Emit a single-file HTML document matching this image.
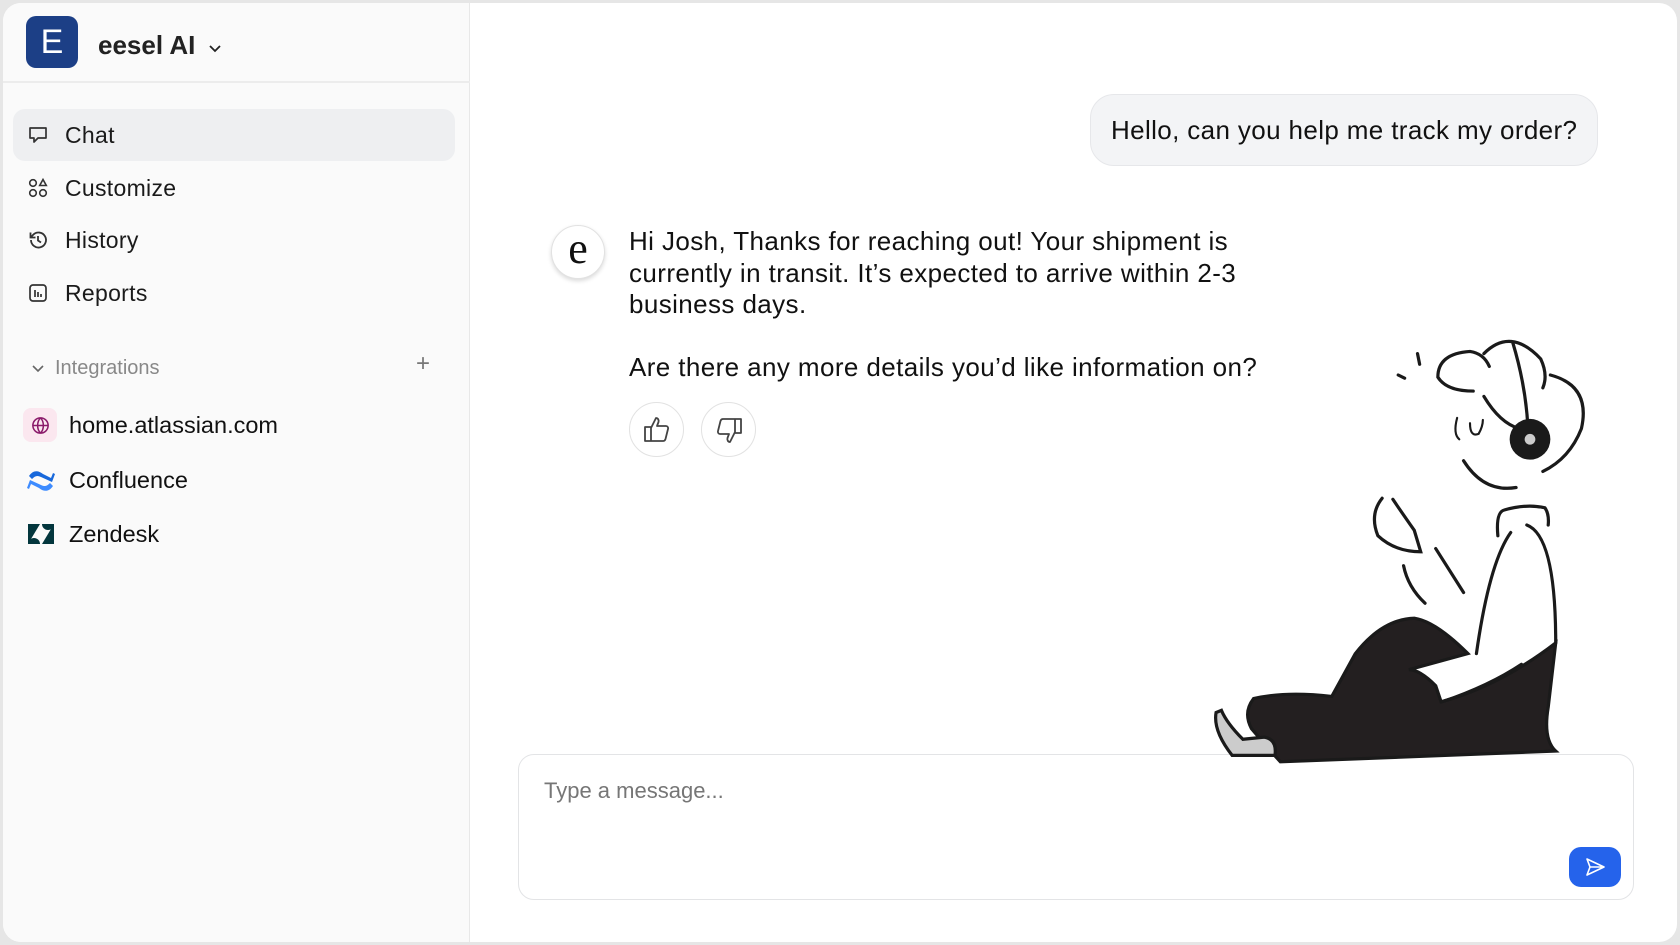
<!DOCTYPE html>
<html><head><meta charset="utf-8"><style>
*{box-sizing:border-box;margin:0;padding:0}
html,body{width:1680px;height:945px;overflow:hidden;background:#e6e6e6;font-family:"Liberation Sans",Arial,sans-serif;color:#111}
.frame{position:absolute;left:3px;top:3px;width:1674px;height:939px;background:#fff;border-radius:18px;overflow:hidden}
.side{position:absolute;left:0;top:0;width:467px;height:100%;background:#fafafa;border-right:1px solid #e8e8e8}
.hdr{position:absolute;left:0;top:0;width:467px;height:80px;border-bottom:2px solid #ececec}
.logo{position:absolute;left:23px;top:13px;width:52px;height:52px;background:#1c3f86;border-radius:10px;color:#fff;font-size:34px;text-align:center;line-height:52px}
.brand{position:absolute;left:95px;top:27px;font-size:26px;font-weight:bold;color:#222}
.nav{position:absolute;left:10px;width:442px;height:52px;border-radius:12px;font-size:23px;letter-spacing:.3px;line-height:52px;padding-left:52px;color:#1a1a1a}
.nav svg{position:absolute;left:14px;top:15px}
.act{background:#eeeff1}
.t{position:absolute;white-space:nowrap}
.msg{font-size:26px;letter-spacing:.4px;line-height:31.6px;color:#111}
.circ{position:absolute;border-radius:50%;border:1px solid #e2e2e2;background:#fff}
</style></head><body>
<div class="frame">
<div class="side">
 <div class="hdr"><div class="logo">E</div><div class="brand">eesel AI</div>
 <svg style="position:absolute;left:205px;top:41px" width="14" height="10" viewBox="0 0 14 10"><path d="M2 2l5 5 5-5" fill="none" stroke="#222" stroke-width="1.8"/></svg></div>
 <div class="nav act" style="top:106px">Chat<svg width="22" height="22" viewBox="0 0 22 22"><path d="M3 4h16v10h-8l-4 4v-4H3z" fill="none" stroke="#333" stroke-width="1.7" stroke-linejoin="round"/></svg></div>
 <div class="nav" style="top:158.5px">Customize<svg width="22" height="22" viewBox="0 0 22 22" fill="none" stroke="#333" stroke-width="1.6"><circle cx="6" cy="6" r="3.3"/><path d="M16 2.5l3.3 6h-6.6z"/><circle cx="6" cy="16" r="3.3"/><circle cx="16" cy="16" r="3.3"/></svg></div>
 <div class="nav" style="top:211px">History<svg width="22" height="22" viewBox="0 0 22 22" fill="none" stroke="#333" stroke-width="1.8"><path d="M4 11a7.5 7.5 0 1 0 2.2-5.3L3.5 8.5"/><path d="M3.5 3.5v5h5"/><path d="M11 7v4.5l3 2"/></svg></div>
 <div class="nav" style="top:263.5px">Reports<svg width="22" height="22" viewBox="0 0 22 22" fill="none" stroke="#333" stroke-width="1.7"><rect x="3" y="3" width="16" height="16" rx="3"/><path d="M8 8v7M11 10v5M14 12v3"/></svg></div>
 <svg style="position:absolute;left:28px;top:361px" width="14" height="10" viewBox="0 0 14 10"><path d="M2 2l5 5 5-5" fill="none" stroke="#666" stroke-width="1.6"/></svg>
 <div class="t" style="left:52px;top:354px;font-size:20px;color:#888">Integrations</div>
 <div class="t" style="left:413px;top:347px;font-size:24px;color:#777;font-weight:300">+</div>
 <div style="position:absolute;left:20px;top:405px;width:34px;height:34px;background:#fbe7ef;border-radius:8px"></div>
 <svg style="position:absolute;left:27px;top:412px" width="21" height="21" viewBox="0 0 22 22" fill="none" stroke="#8a1a6a" stroke-width="1.6"><circle cx="11" cy="11" r="8"/><path d="M3 11h16M11 3c-4 4-4 12 0 16M11 3c4 4 4 12 0 16"/></svg>
 <div class="t" style="left:66px;top:409px;font-size:23.5px">home.atlassian.com</div>
 <svg style="position:absolute;left:24px;top:464px" width="28" height="28" viewBox="0 0 28 28"><path d="M2 9c4-6 9-6 14-2l8 4 2-5 2 1-3 8-11-5c-4-2-6-1-9 2z" fill="#1868db"/><path d="M26 19c-4 6-9 6-14 2l-8-4-2 5-2-1 3-8 11 5c4 2 6 1 9-2z" fill="#3d8bff"/></svg>
 <div class="t" style="left:66px;top:464px;font-size:23.5px">Confluence</div>
 <svg style="position:absolute;left:24px;top:520px" width="28" height="22" viewBox="0 0 28 22" fill="#03363d"><path d="M1 1h12L1 21z"/><path d="M27 21H15L27 1z"/><path d="M15 1a6 6 0 0 0 12 0z"/><path d="M1 21a6 6 0 0 1 12 0z"/></svg>
 <div class="t" style="left:66px;top:518px;font-size:23.5px">Zendesk</div>
</div>
<div style="position:absolute;left:1087px;top:91px;width:508px;height:72px;background:#f3f4f6;border:1px solid #e6e7ea;border-radius:24px"></div>
<div class="t" style="left:1108px;top:112px;font-size:26px;letter-spacing:.37px">Hello, can you help me track my order?</div>
<div class="circ" style="left:548px;top:222px;width:54px;height:54px;box-shadow:0 2px 4px rgba(0,0,0,.15);font-family:'Liberation Serif',serif;font-size:44px;text-align:center;line-height:46px">e</div>
<div class="t msg" style="left:626px;top:223px">Hi Josh, Thanks for reaching out! Your shipment is<br>currently in transit. It’s expected to arrive within 2-3<br>business days.</div>
<div class="t msg" style="left:626px;top:349px">Are there any more details you’d like information on?</div>
<div class="circ" style="left:626px;top:399px;width:55px;height:55px"></div>
<div class="circ" style="left:698px;top:399px;width:55px;height:55px"></div>
<svg style="position:absolute;left:639px;top:411px" width="30" height="30" viewBox="0 0 30 30" fill="none" stroke="#444" stroke-width="1.8" stroke-linejoin="round"><path d="M3 13h6v14H3zM9 14l5-10c2 0 3 2 2.5 4L15 12h9c1.5 0 2.5 1.5 2 3l-2.5 10c-.3 1-1 2-2.5 2H9"/></svg>
<svg style="position:absolute;left:711px;top:413px" width="30" height="30" viewBox="0 0 30 30" fill="none" stroke="#444" stroke-width="1.8" stroke-linejoin="round"><g transform="rotate(180 15 15)"><path d="M3 13h6v14H3zM9 14l5-10c2 0 3 2 2.5 4L15 12h9c1.5 0 2.5 1.5 2 3l-2.5 10c-.3 1-1 2-2.5 2H9"/></g></svg>
<div style="position:absolute;left:515px;top:751px;width:1116px;height:146px;border:1px solid #e3e4e6;border-radius:16px;background:#fff"></div>
<div class="t" style="left:541px;top:775px;font-size:22px;color:#767676">Type a message...</div>
<div style="position:absolute;left:1566px;top:844px;width:52px;height:40px;background:#2563eb;border-radius:12px"></div>
<svg style="position:absolute;left:1581px;top:853px" width="22" height="22" viewBox="0 0 22 22" fill="none" stroke="#fff" stroke-width="1.6" stroke-linejoin="round"><path d="M3 3l17 8-17 8 3-8zM6 11h14"/></svg>
</div>
<svg style="position:absolute;left:0;top:0" width="1680" height="945" viewBox="0 0 1568 882">
<g fill="none" stroke="#1a1a1a" stroke-width="3" stroke-linecap="round">
<path d="M1195 711 L1452 701 Q1440 690 1445 660 L1452 600 Q1400 640 1345 655 L1340 640 Q1325 625 1315 625 L1370 610 Q1340 580 1320 577 Q1290 578 1265 610 L1243 650 Q1200 645 1170 652 Q1160 665 1168 680 L1185 700 Z" fill="#231f20"/>
<path d="M1135 665 Q1132 682 1150 705 L1190 705 Q1192 690 1180 688 L1160 690 Q1145 675 1140 663 Z" fill="#ccc"/>
<path d="M1398 500 Q1396 478 1404 476 Q1425 470 1442 474 Q1446 480 1445 490"/>
<path d="M1410 497 Q1390 525 1378 610"/>
<path d="M1425 490 Q1452 500 1452 600"/>
<path d="M1340 512 L1366 553"/>
<path d="M1310 528 Q1314 548 1330 563"/>
<path d="M1346 655 Q1390 640 1420 620"/>
<path d="M1290 465 Q1278 480 1286 500 Q1302 515 1326 515 L1320 495 Q1306 475 1300 466"/>
<path d="M1375 365 Q1350 365 1342 352 Q1342 330 1372 328 Q1385 330 1390 342"/>
<path d="M1385 330 Q1410 305 1438 335 Q1445 350 1440 362"/>
<path d="M1447 350 Q1485 360 1476 400 Q1465 428 1440 440"/>
<path d="M1412 320 Q1424 360 1426 398"/>
<path d="M1385 370 Q1400 395 1418 400"/>
<path d="M1366 430 Q1385 460 1415 455"/>
<path d="M1360 390 Q1356 405 1362 410 M1372 395 Q1372 408 1380 405 Q1384 398 1384 392" stroke-width="2"/>
<path d="M1305 350 L1311 353 M1323 330 L1325 340"/>
</g>
<circle cx="1428" cy="410" r="19" fill="#1a1a1a"/><circle cx="1428" cy="410" r="5" fill="#ccc"/>
</svg>
</body></html>
